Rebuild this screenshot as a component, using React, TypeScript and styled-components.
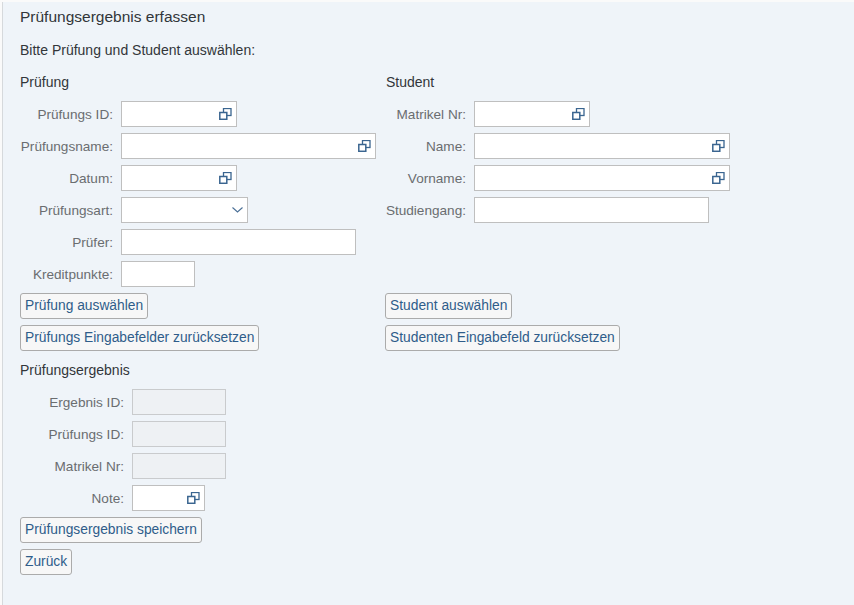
import styled, { createGlobalStyle } from 'styled-components';

const GlobalStyle = createGlobalStyle`
  html, body {
    margin: 0;
    padding: 0;
    background: #fafafa;
    font-family: "Liberation Sans", Arial, sans-serif;
  }
  * {
    box-sizing: border-box;
  }
`;

interface FieldDef {
  label: string;
  width: number;
  kind?: 'help' | 'select' | 'plain' | 'disabled';
}

const examFields: FieldDef[] = [
  { label: 'Prüfungs ID:', width: 116, kind: 'help' },
  { label: 'Prüfungsname:', width: 255, kind: 'help' },
  { label: 'Datum:', width: 116, kind: 'help' },
  { label: 'Prüfungsart:', width: 127, kind: 'select' },
  { label: 'Prüfer:', width: 235 },
  { label: 'Kreditpunkte:', width: 74 },
];

const studentFields: FieldDef[] = [
  { label: 'Matrikel Nr:', width: 116, kind: 'help' },
  { label: 'Name:', width: 256, kind: 'help' },
  { label: 'Vorname:', width: 256, kind: 'help' },
  { label: 'Studiengang:', width: 235 },
];

const resultFields: FieldDef[] = [
  { label: 'Ergebnis ID:', width: 94, kind: 'disabled' },
  { label: 'Prüfungs ID:', width: 94, kind: 'disabled' },
  { label: 'Matrikel Nr:', width: 94, kind: 'disabled' },
  { label: 'Note:', width: 73, kind: 'help' },
];

function ValueHelpIcon() {
  return (
    <svg width="13" height="12" viewBox="0 0 13 12">
      <rect x="4.5" y="0.5" width="7.5" height="7" fill="none" stroke="#3a6590" strokeWidth="1.3" />
      <rect x="0.8" y="4.5" width="7" height="6.8" fill="#ffffff" stroke="#3a6590" strokeWidth="1.5" />
    </svg>
  );
}

function ChevronIcon() {
  return (
    <svg width="11" height="6" viewBox="0 0 11 6">
      <path d="M0.5 0.5 L5.5 5 L10.5 0.5" fill="none" stroke="#4a6f96" strokeWidth="1.1" />
    </svg>
  );
}

function Field({ label, width, kind = 'plain' }: FieldDef) {
  return (
    <>
      <Label>{label}</Label>
      <InputBox width={width} disabled={kind === 'disabled'}>
        {kind === 'help' && <ValueHelpIcon />}
        {kind === 'select' && <ChevronIcon />}
      </InputBox>
    </>
  );
}

export default function App() {
  return (
    <Page>
      <GlobalStyle />
      <Dialog>
        <Title>Prüfungsergebnis erfassen</Title>
        <Intro>Bitte Prüfung und Student auswählen:</Intro>
        <Columns>
          <Block>
            <Heading>Prüfung</Heading>
            <FieldGrid labelWidth={93}>
              {examFields.map((f) => (
                <Field key={f.label} {...f} />
              ))}
            </FieldGrid>
          </Block>
          <Block>
            <Heading>Student</Heading>
            <FieldGrid labelWidth={80}>
              {studentFields.map((f) => (
                <Field key={f.label} {...f} />
              ))}
            </FieldGrid>
          </Block>
          <ButtonStack>
            <Button>Prüfung auswählen</Button>
            <Button>Prüfungs Eingabefelder zurücksetzen</Button>
          </ButtonStack>
          <ButtonStack className="right">
            <Button>Student auswählen</Button>
            <Button>Studenten Eingabefeld zurücksetzen</Button>
          </ButtonStack>
        </Columns>
        <Heading className="result">Prüfungsergebnis</Heading>
        <FieldGrid labelWidth={104}>
          {resultFields.map((f) => (
            <Field key={f.label} {...f} />
          ))}
        </FieldGrid>
        <ButtonStack className="bottom">
          <Button>Prüfungsergebnis speichern</Button>
          <Button>Zurück</Button>
        </ButtonStack>
      </Dialog>
    </Page>
  );
}

const Page = styled.div`
  display: flex;
  width: 854px;
  height: 605px;
  padding-top: 2px;
  padding-left: 2px;
  overflow: hidden;
`;

const Dialog = styled.div`
  flex: 1;
  display: flex;
  flex-direction: column;
  align-items: flex-start;
  background-color: #eff4f9;
  border-left: 1px solid #d6d9dc;
  padding: 5px 17px 0;
  color: #32363a;
`;

const Title = styled.h1`
  margin: 0;
  font-size: 15.5px;
  font-weight: 400;
  line-height: 20px;
`;

const Intro = styled.p`
  margin: 14px 0 0;
  font-size: 14px;
  line-height: 18px;
`;

const Columns = styled.div`
  display: grid;
  grid-template-columns: 366px auto;
  row-gap: 6px;
  margin-top: 14px;
`;

const Block = styled.div`
  display: flex;
  flex-direction: column;
  align-items: flex-start;
`;

const Heading = styled.h2`
  margin: 0 0 10px;
  font-size: 14px;
  font-weight: 400;
  line-height: 18px;

  &.result {
    margin-top: 10px;
  }
`;

interface FieldGridProps {
  labelWidth: number;
}

const FieldGrid = styled.div<FieldGridProps>`
  display: grid;
  grid-template-columns: ${({ labelWidth }) => labelWidth}px auto;
  grid-auto-rows: 26px;
  column-gap: 8px;
  row-gap: 6px;
  align-items: center;
  justify-items: start;
`;

const Label = styled.span`
  justify-self: end;
  font-size: 13.6px;
  color: #6a6d70;
  white-space: nowrap;
`;

interface InputBoxProps {
  width: number;
  disabled?: boolean;
}

const InputBox = styled.div<InputBoxProps>`
  display: flex;
  align-items: center;
  justify-content: flex-end;
  width: ${({ width }) => width}px;
  height: 26px;
  padding-right: 4px;
  background-color: ${({ disabled }) => (disabled ? '#eef1f4' : '#ffffff')};
  border: 1px solid ${({ disabled }) => (disabled ? '#c9cbcd' : '#bfbfbf')};

  & > svg {
    flex: 0 0 auto;
  }
`;

const ButtonStack = styled.div`
  display: flex;
  flex-direction: column;
  align-items: flex-start;
  gap: 6px;

  &.right {
    margin-left: -1px;
  }

  &.bottom {
    margin-top: 6px;
  }
`;

const Button = styled.button`
  height: 26px;
  padding: 0 4px;
  background-color: #f7f7f7;
  border: 1px solid #ababab;
  border-radius: 3px;
  color: #2f5d8a;
  font-family: "Liberation Sans", Arial, sans-serif;
  font-size: 13.8px;
  line-height: 24px;
  white-space: nowrap;
  cursor: pointer;
`;
